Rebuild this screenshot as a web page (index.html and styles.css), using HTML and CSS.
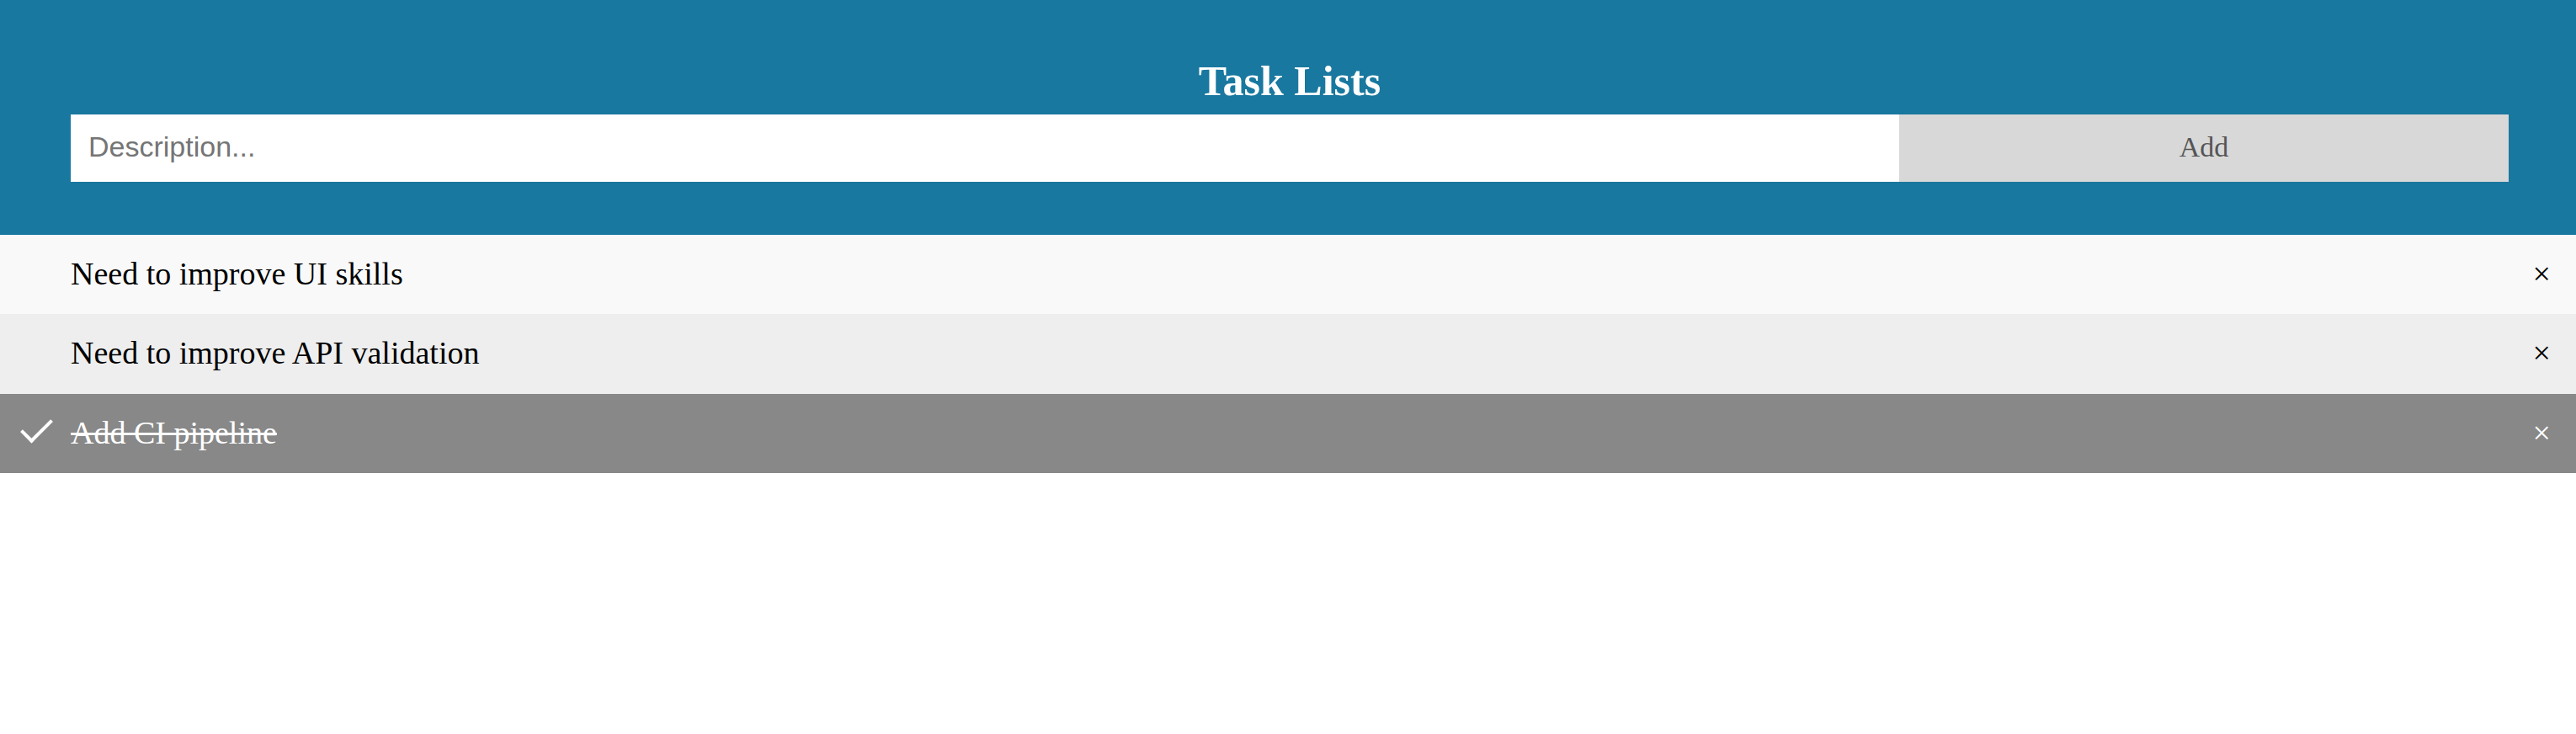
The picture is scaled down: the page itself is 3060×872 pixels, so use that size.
FILE: index.html
```html
<!DOCTYPE html>
<html lang="en">
<head>
<meta charset="utf-8">
<title>Task Lists</title>
<link rel="stylesheet" href="styles.css">
</head>
<body>
<header class="header">
  <h1 class="title">Task Lists</h1>
  <form class="form">
    <input class="field" type="text" placeholder="Description..." aria-label="Description">
    <button class="add" type="button">Add</button>
  </form>
</header>
<ul class="tasks">
  <li class="task"><span class="name">Need to improve UI skills</span><button class="close" type="button" aria-label="Delete">×</button></li>
  <li class="task"><span class="name">Need to improve API validation</span><button class="close" type="button" aria-label="Delete">×</button></li>
  <li class="task done"><span class="name">Add CI pipeline</span><button class="close" type="button" aria-label="Delete">×</button></li>
</ul>
</body>
</html>
```

FILE: styles.css
```css
*,
*::before {
  box-sizing: border-box;
}

body {
  margin: 0;
  font-family: "Liberation Serif", serif;
  background: #fff;
}

.header {
  padding: 68px 80px 63px 84px;
  background: #19789f;
  color: #fff;
  text-align: center;
}

.title {
  margin: 0 0 12px;
  font-size: 50px;
  line-height: 56px;
}

.form {
  display: flex;
}

.field {
  width: 75%;
  height: 80px;
  padding: 18px 21px 21px;
  border: 0;
  border-radius: 0;
  background: #fff;
  font: 34px "Liberation Sans", sans-serif;
}

.add {
  width: 25%;
  height: 80px;
  padding: 18px 21px 21px;
  border: 0;
  background: #d8d8d8;
  color: #555;
  font: 34px "Liberation Serif", serif;
  cursor: pointer;
}

.tasks {
  margin: 0;
  padding: 0;
  list-style: none;
}

.task {
  position: relative;
  display: flex;
  align-items: stretch;
  justify-content: space-between;
  padding: 0 0 2px 84px;
  background: #eee;
  font-size: 38px;
  line-height: 92px;
  cursor: pointer;
}

.task:nth-child(odd) {
  background: #f9f9f9;
}

.task.done {
  border-top: 1px solid #eee;
  background: #888;
  color: #fff;
}

.done .name {
  text-decoration: line-through 3px;
}

.done::before {
  content: "";
  position: absolute;
  top: 21px;
  left: 34px;
  width: 19px;
  height: 36px;
  border: solid #fff;
  border-width: 0 4px 4px 0;
  transform: rotate(45deg);
}

.close {
  padding: 0 30px;
  border: 0;
  background: none;
  color: inherit;
  font: inherit;
  cursor: pointer;
}
```
